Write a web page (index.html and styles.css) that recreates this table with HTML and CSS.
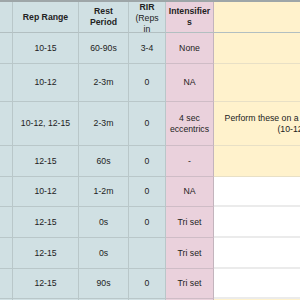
FILE: index.html
```html
<!DOCTYPE html>
<html>
<head>
<meta charset="utf-8">
<link rel="stylesheet" href="styles.css">
</head>
<body>
<div class="sheet">
  <div class="c b h"></div>
  <div class="c b h"><span class="bold">Rep Range</span></div>
  <div class="c b h"><span class="bold">Rest<br>Period</span></div>
  <div class="c b h top"><span><span class="bold">RIR</span><br>(Reps<br>in</span></div>
  <div class="c p h"><span class="bold">Intensifier<br>s</span></div>
  <div class="c y h"></div>

  <div class="c b r1"></div>
  <div class="c b r1">10-15</div>
  <div class="c b r1">60-90s</div>
  <div class="c b r1">3-4</div>
  <div class="c p r1">None</div>
  <div class="c y r1"></div>

  <div class="c b r2"></div>
  <div class="c b r2">10-12</div>
  <div class="c b r2">2-3m</div>
  <div class="c b r2">0</div>
  <div class="c p r2">NA</div>
  <div class="c y r2"></div>

  <div class="c b r3"></div>
  <div class="c b r3">10-12, 12-15</div>
  <div class="c b r3">2-3m</div>
  <div class="c b r3">0</div>
  <div class="c p r3"><span>4 sec<br>eccentrics</span></div>
  <div class="c y r3 note"><span>Perform these on a superset with the next<br>(10-12, 12-15)</span></div>

  <div class="c b r4"></div>
  <div class="c b r4">12-15</div>
  <div class="c b r4">60s</div>
  <div class="c b r4">0</div>
  <div class="c p r4">-</div>
  <div class="c y r4"></div>

  <div class="c b r5"></div>
  <div class="c b r5">10-12</div>
  <div class="c b r5">1-2m</div>
  <div class="c b r5">0</div>
  <div class="c p r5">NA</div>
  <div class="c w r5"></div>

  <div class="c b r6"></div>
  <div class="c b r6">12-15</div>
  <div class="c b r6">0s</div>
  <div class="c b r6">0</div>
  <div class="c p r6">Tri set</div>
  <div class="c w r6"></div>

  <div class="c b r7"></div>
  <div class="c b r7">12-15</div>
  <div class="c b r7">0s</div>
  <div class="c b r7"></div>
  <div class="c p r7">Tri set</div>
  <div class="c w r7"></div>

  <div class="c b r8"></div>
  <div class="c b r8">12-15</div>
  <div class="c b r8">90s</div>
  <div class="c b r8">0</div>
  <div class="c p r8">Tri set</div>
  <div class="c w r8"></div>

  <div class="c b r9"></div>
  <div class="c b r9"></div>
  <div class="c b r9"></div>
  <div class="c b r9"></div>
  <div class="c p r9"></div>
  <div class="c y r9"></div>
</div>
</body>
</html>
```
FILE: styles.css
```css
html, body {
  margin: 0;
  padding: 0;
  background: #ffffff;
  overflow: hidden;
}
.sheet {
  width: 300px;
  height: 300px;
  overflow: hidden;
  border-top: 2px solid #9ea6a8;
  box-sizing: border-box;
  display: grid;
  grid-template-columns: 13px 66px 50px 37px 48px 183px;
  grid-template-rows: 31px 31px 38px 44px 31px 30px 31px 31px 30px 30px;
  font-family: "Liberation Sans", Arial, sans-serif;
  font-size: 8.7px;
  line-height: 11px;
  color: #222222;
}
.c {
  box-sizing: border-box;
  border-right: 1px solid #b9c7c9;
  border-bottom: 1px solid #b9c7c9;
  display: flex;
  align-items: center;
  justify-content: center;
  text-align: center;
  overflow: hidden;
  white-space: nowrap;
}
.b { background: #d0e0e3; }
.p { background: #ead1dc; border-right-color: #c3b4bd; border-bottom-color: #cfbcc6; }
.y { background: #fff2cc; border-bottom-color: #e8e0c6; border-right-color: #e4dcc4; }
.w { background: #ffffff; border-bottom: 2px solid #ebebeb; }
.h { border-bottom-color: #b2bfc1; }
.top { align-items: flex-start; }
.bold { font-weight: bold; }
.note { justify-content: center; }
```
